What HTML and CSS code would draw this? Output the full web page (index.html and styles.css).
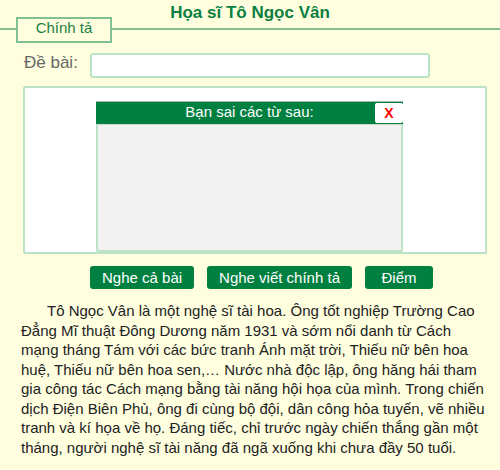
FILE: index.html
```html
<!DOCTYPE html>
<html lang="vi">
<head>
    <meta charset="UTF-8">
    <meta name="viewport" content="width=device-width, initial-scale=1.0">
    <title>Chính tả - Họa sĩ Tô Ngọc Vân</title>
    <link rel="stylesheet" href="styles.css">
</head>
<body>

<div class="page">
    <h1 class="title">Họa sĩ Tô Ngọc Vân</h1>

    <div class="tab-row">
        <span class="tab-line tab-line-start"></span>
        <span class="tab">Chính tả</span>
        <span class="tab-line"></span>
    </div>

    <div class="topic-row">
        <label for="topic" class="topic-label">Đề bài:</label>
        <input type="text" id="topic" class="topic-input">
    </div>

    <div class="work-area">
        <textarea id="answer" class="answer"></textarea>

        <div class="result" id="resultBox">
            <div class="result-head">
                Bạn sai các từ sau:
                <button type="button" class="result-close" onclick="closeResult()">X</button>
            </div>
            <div class="result-body" id="wrongWords"></div>
        </div>
    </div>

    <div class="actions">
        <button type="button" class="btn">Nghe cả bài</button>
        <button type="button" class="btn">Nghe viết chính tả</button>
        <button type="button" class="btn">Điểm</button>
    </div>

    <p class="passage">Tô Ngọc Vân là một nghệ sĩ tài hoa. Ông tốt nghiệp Trường Cao Đẳng Mĩ thuật Đông Dương năm 1931 và sớm nổi danh từ Cách mạng tháng Tám với các bức tranh Ánh mặt trời, Thiếu nữ bên hoa huệ, Thiếu nữ bên hoa sen,… Nước nhà độc lập, ông hăng hái tham gia công tác Cách mạng bằng tài năng hội họa của mình. Trong chiến dịch Điện Biên Phủ, ông đi cùng bộ đội, dân công hỏa tuyến, vẽ nhiều tranh và kí họa về họ. Đáng tiếc, chỉ trước ngày chiến thắng gần một tháng, người nghệ sĩ tài năng đã ngã xuống khi chưa đầy 50 tuổi.</p>
</div>

<script>
    function closeResult() {
        document.getElementById("resultBox").style.display = "none";
    }
</script>

</body>
</html>
```

FILE: styles.css
```css
body {
    margin: 0;
    background: #ffffe0;
    font-family: "Liberation Sans", Arial, sans-serif;
}
.page {
    width: 500px;
    height: 470px;
    overflow: hidden;
}
.title {
    margin: 0;
    padding-top: 3px;
    font-size: 17px;
    line-height: 20px;
    font-weight: bold;
    text-align: center;
    color: #0b7f3f;
}
.tab-row {
    display: flex;
    align-items: flex-start;
    margin-top: -6px;
}
.tab-line {
    flex: 1;
    height: 2px;
    margin-top: 11px;
    background: #80c092;
}
.tab-line-start {
    flex: none;
    width: 16px;
}
.tab {
    width: 96px;
    box-sizing: border-box;
    border: 2px solid #80c092;
    padding: 0 0 5px;
    font-size: 15px;
    line-height: 17px;
    text-align: center;
    color: #1a8040;
}
.topic-row {
    display: flex;
    align-items: flex-start;
    margin-top: 10px;
    padding-left: 24px;
}
.topic-label {
    width: 66px;
    font-size: 17px;
    line-height: 19px;
    color: #666;
}
.topic-input {
    width: 340px;
    height: 25px;
    box-sizing: border-box;
    margin: 0;
    border: 2px solid #bde3c7;
    border-radius: 3px;
    background: #fff;
    outline: none;
}
.work-area {
    position: relative;
    width: 464px;
    height: 168px;
    box-sizing: border-box;
    margin: 8px 0 0 23px;
    border: 2px solid #bde3c7;
    border-radius: 2px;
    background: #fff;
}
.answer {
    display: block;
    width: 100%;
    height: 100%;
    box-sizing: border-box;
    border: none;
    resize: none;
    outline: none;
    background: transparent;
}
.result {
    position: absolute;
    left: 71px;
    top: 13px;
    width: 307px;
}
.result-head {
    position: relative;
    height: 22px;
    border-top: 1px solid #a9b8ae;
    background: #008040;
    color: #fff;
    font-size: 15px;
    line-height: 20px;
    text-align: center;
}
.result-close {
    position: absolute;
    top: 1px;
    right: 0;
    width: 28px;
    height: 20px;
    padding: 0 0 1px;
    border: none;
    border-radius: 2px;
    background: #fff;
    color: #f00;
    font-family: "Liberation Sans", Arial, sans-serif;
    font-size: 14px;
    font-weight: bold;
    cursor: pointer;
}
.result-body {
    height: 128px;
    box-sizing: border-box;
    border: 2px solid #bde3c7;
    border-top: 1px solid #c8d8cc;
    border-radius: 0 0 2px 2px;
    background: #f2f2f2;
}
.actions {
    display: flex;
    gap: 13px;
    margin: 12px 0 0 90px;
}
.btn {
    min-width: 68px;
    height: 23px;
    padding: 0 12px;
    border: none;
    border-radius: 3px;
    background: #008040;
    color: #fff;
    font-family: "Liberation Sans", Arial, sans-serif;
    font-size: 15px;
    line-height: 21px;
    cursor: pointer;
}
.passage {
    margin: 12px 15px 0 21px;
    font-size: 15px;
    line-height: 19.5px;
    text-indent: 26px;
    color: #222;
}
```
